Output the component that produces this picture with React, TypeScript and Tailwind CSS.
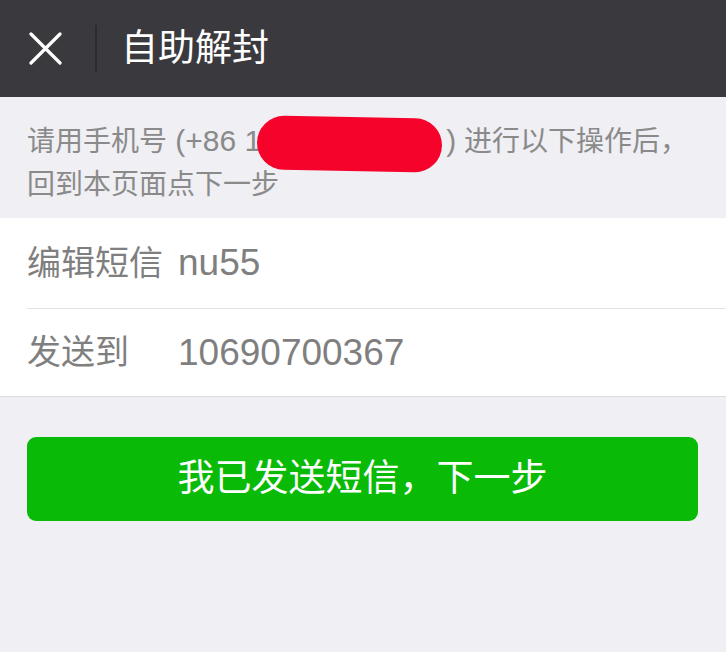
const FONT = "font-['Liberation_Sans','Noto_Sans_CJK_SC',sans-serif]";

const App = () => {
  return (
    <div className={`min-h-[652px] w-full bg-[#efeff4] ${FONT}`}>
      {/* Top bar */}
      <div className="flex h-[97px] items-center bg-[#3a3a3e]">
        <div className="flex w-[95px] items-center pl-[29px]">
          <svg width="33" height="33" viewBox="0 0 33 33" fill="none">
            <path d="M2 2L31 31M31 2L2 31" stroke="#ffffff" strokeWidth="3.2" strokeLinecap="round" />
          </svg>
        </div>
        <div className="h-[47px] w-[2px] bg-[#2b2b2e]" />
        <div className="pl-[24px] text-[37px] leading-none text-white">自助解封</div>
      </div>

      {/* Tip */}
      <div className="pl-[27px] pr-4 pt-[22px] pb-[11px] text-[28px] leading-[44px] text-[#8a8a8a]">
        <div className="h-[44px] whitespace-nowrap">
          请用手机号<span className="text-[30px]"> (+86 1</span>
          <span className="-my-[5px] -ml-[4px] inline-block h-[54px] w-[185px] rotate-1 rounded-full bg-[#f5032a] align-middle" />
          <span className="ml-[4px]">
            <span className="text-[30px]">)</span> 进行以下操作后，
          </span>
        </div>
        <div className="h-[44px]">回到本页面点下一步</div>
      </div>

      {/* Fields */}
      <div className="border-b border-[#dcdcdc] bg-white text-[34px] text-[#7f7f7f]">
        <div className="flex h-[90px] items-center pl-[27px]">
          <span className="w-[151px]">编辑短信</span>
          <span className="text-[37px]">nu55</span>
        </div>
        <div className="ml-[27px] h-px bg-[#e2e2e2]" />
        <div className="flex h-[87px] items-center pl-[27px]">
          <span className="w-[151px]">发送到</span>
          <span className="text-[37px]">10690700367</span>
        </div>
      </div>

      {/* Action */}
      <div className="px-[27px] pt-[40px]">
        <button
          type="button"
          className="flex h-[84px] w-[671px] items-center justify-center rounded-[9px] bg-[#09bb07] text-[37px] text-white"
        >
          我已发送短信，下一步
        </button>
      </div>
    </div>
  );
};

export default App;
